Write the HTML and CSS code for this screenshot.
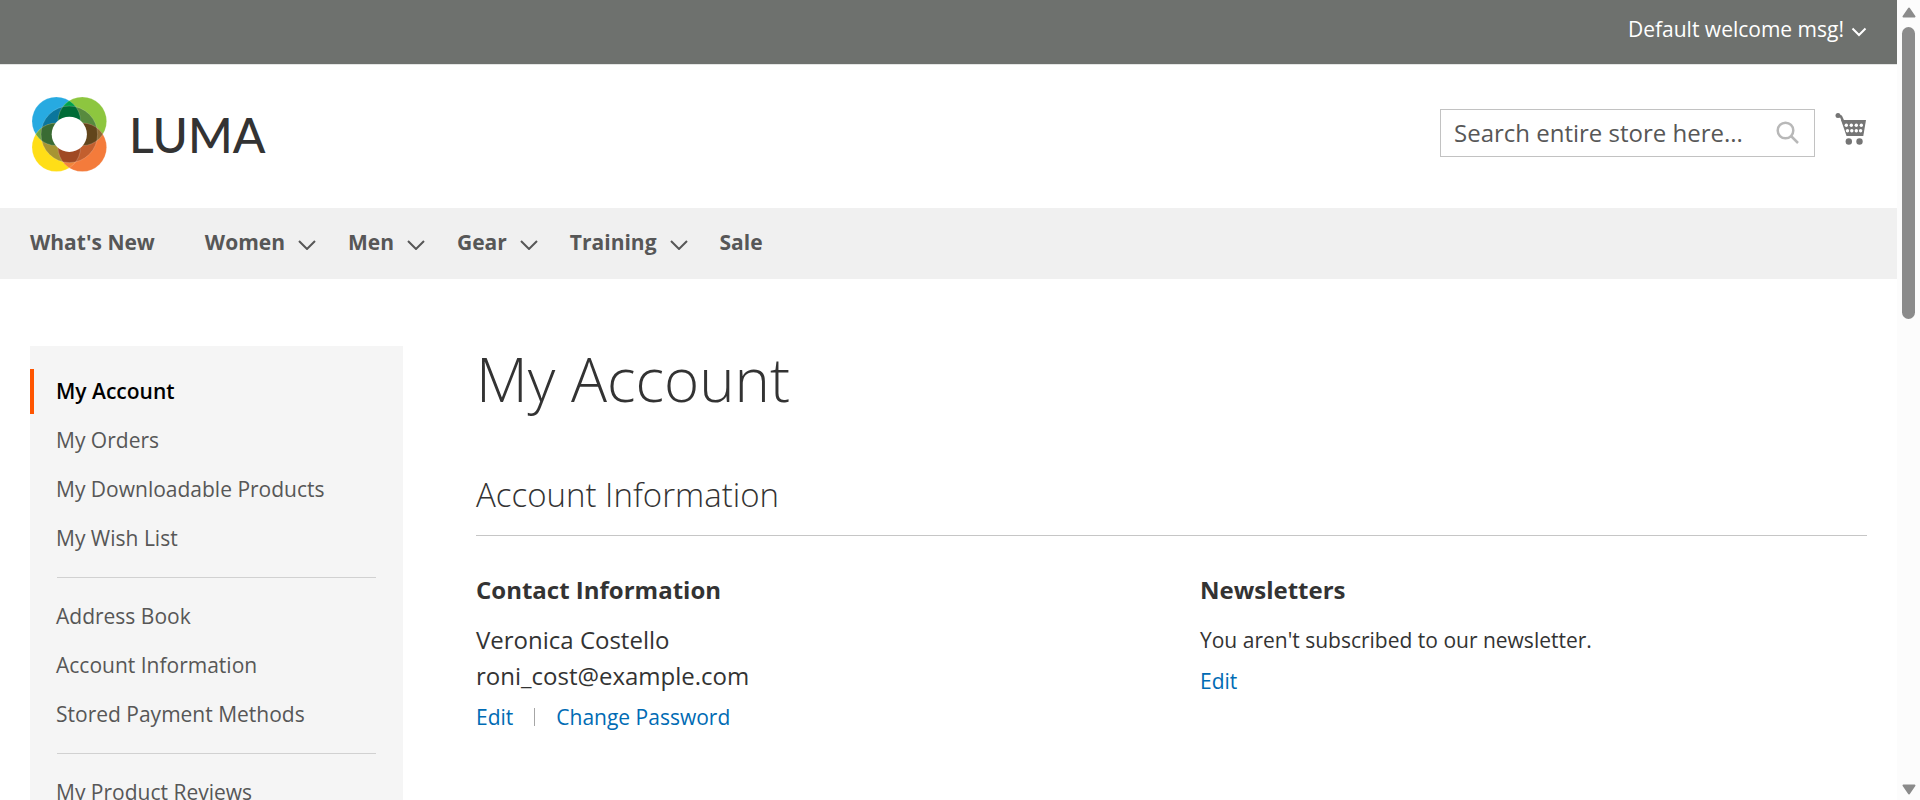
FILE: index.html
```html
<!DOCTYPE html>
<html lang="en">
<head>
<meta charset="utf-8">
<title>My Account</title>
<link rel="stylesheet" href="styles.css">
</head>
<body>
<div class="window">
  <div class="page">
    <div class="topbar">
      <button class="welcome" type="button">Default welcome msg!
        <svg class="welcome-arrow" viewBox="0 0 16 10" aria-hidden="true"><path d="M1.5 1.5 8 8l6.500-6.500"/></svg>
      </button>
    </div>

    <header class="header">
      <a class="logo" href="#" aria-label="Luma home">
        <svg class="logo-mark" viewBox="0 0 75 75" aria-hidden="true">
          <defs>
            <clipPath id="blue"><circle cx="24.300" cy="24.300" r="24.300"/></clipPath>
            <clipPath id="orange"><circle cx="50.300" cy="50.300" r="24.300"/></clipPath>
            <clipPath id="ring"><circle cx="37.300" cy="37.300" r="28.300"/></clipPath>
          </defs>
          <circle cx="24.300" cy="24.300" r="24.300" fill="#27aae1"/>
          <circle cx="50.300" cy="24.300" r="24.300" fill="#8dc63f"/>
          <circle cx="24.300" cy="50.300" r="24.300" fill="#ffde17"/>
          <circle cx="50.300" cy="50.300" r="24.300" fill="#f47b3b"/>
          <g clip-path="url(#blue)">
            <circle cx="50.300" cy="24.300" r="24.300" fill="#00a14b"/>
            <circle cx="24.300" cy="50.300" r="24.300" fill="#6aa343"/>
          </g>
          <g clip-path="url(#orange)">
            <circle cx="50.300" cy="24.300" r="24.300" fill="#8f6a35"/>
            <circle cx="24.300" cy="50.300" r="24.300" fill="#f2853a"/>
          </g>
          <g clip-path="url(#ring)">
            <circle cx="24.300" cy="24.300" r="24.300" fill="#0b769c"/>
            <circle cx="50.300" cy="24.300" r="24.300" fill="#578a3e"/>
            <circle cx="24.300" cy="50.300" r="24.300" fill="#a79433"/>
            <circle cx="50.300" cy="50.300" r="24.300" fill="#c25f2e"/>
            <g clip-path="url(#blue)">
              <circle cx="50.300" cy="24.300" r="24.300" fill="#006b37"/>
              <circle cx="24.300" cy="50.300" r="24.300" fill="#3a6b33"/>
            </g>
            <g clip-path="url(#orange)">
              <circle cx="50.300" cy="24.300" r="24.300" fill="#62451c"/>
              <circle cx="24.300" cy="50.300" r="24.300" fill="#a04923"/>
            </g>
          </g>
          <g fill="none" stroke="#fff" stroke-opacity=".3" stroke-width=".6">
            <circle cx="37.300" cy="37.300" r="28.300"/>
            <circle cx="24.300" cy="24.300" r="24.300"/>
            <circle cx="50.300" cy="24.300" r="24.300"/>
            <circle cx="24.300" cy="50.300" r="24.300"/>
            <circle cx="50.300" cy="50.300" r="24.300"/>
          </g>
          <circle cx="37.300" cy="37.300" r="17.600" fill="#fff"/>
        </svg>
        <span class="logo-name">LUMA</span>
      </a>
      <div class="header-tools">
        <form class="search">
          <input class="search-input" type="text" aria-label="Search" placeholder="Search entire store here...">
          <button class="search-button" type="button" aria-label="Search">
            <svg class="search-icon" viewBox="0 0 24 24" aria-hidden="true"><circle cx="9.500" cy="9.500" r="7.800"/><path d="m15 15 7 7"/></svg>
          </button>
        </form>
        <a class="cart" href="#" aria-label="My Cart">
          <svg class="cart-icon" viewBox="0 0 32 40" aria-hidden="true">
            <path d="M2.500 4.500 6 5.500l8 18" fill="none" stroke="#757575" stroke-width="2.500"/>
            <circle cx="3" cy="4.500" r="2.500"/>
            <path d="M6 9H31l-2.700 16H11.500z"/>
            <g fill="#fff">
              <circle cx="11.300" cy="14.300" r="1.700"/><circle cx="16.300" cy="14.300" r="1.700"/><circle cx="21.300" cy="14.300" r="1.700"/><circle cx="26.300" cy="14.300" r="1.700"/>
              <circle cx="12.500" cy="19.800" r="1.700"/><circle cx="16.800" cy="19.800" r="1.700"/><circle cx="21.300" cy="19.800" r="1.700"/><circle cx="25.600" cy="19.800" r="1.700"/>
            </g>
            <circle cx="13.800" cy="30.500" r="3.200"/><circle cx="24.500" cy="30.500" r="3.200"/>
          </svg>
        </a>
      </div>
    </header>

    <nav class="nav" aria-label="Store">
      <a class="nav-item nav-plain" href="#">What's New</a>
      <a class="nav-item" href="#">Women<svg class="nav-arrow" viewBox="0 0 18 10" aria-hidden="true"><path d="m1 1 8 8 8-8"/></svg></a>
      <a class="nav-item" href="#">Men<svg class="nav-arrow" viewBox="0 0 18 10" aria-hidden="true"><path d="m1 1 8 8 8-8"/></svg></a>
      <a class="nav-item" href="#">Gear<svg class="nav-arrow" viewBox="0 0 18 10" aria-hidden="true"><path d="m1 1 8 8 8-8"/></svg></a>
      <a class="nav-item" href="#">Training<svg class="nav-arrow" viewBox="0 0 18 10" aria-hidden="true"><path d="m1 1 8 8 8-8"/></svg></a>
      <a class="nav-item nav-plain" href="#">Sale</a>
    </nav>

    <div class="columns">
      <aside class="sidebar">
        <ul class="menu">
          <li><a class="menu-item menu-current" href="#" aria-current="page">My Account</a></li>
          <li><a class="menu-item" href="#">My Orders</a></li>
          <li><a class="menu-item" href="#">My Downloadable Products</a></li>
          <li><a class="menu-item" href="#">My Wish List</a></li>
        </ul>
        <hr class="menu-rule">
        <ul class="menu">
          <li><a class="menu-item" href="#">Address Book</a></li>
          <li><a class="menu-item" href="#">Account Information</a></li>
          <li><a class="menu-item" href="#">Stored Payment Methods</a></li>
        </ul>
        <hr class="menu-rule">
        <ul class="menu">
          <li><a class="menu-item" href="#">My Product Reviews</a></li>
        </ul>
      </aside>

      <main class="main">
        <h1 class="title">My Account</h1>
        <section>
          <h2 class="block-title">Account Information</h2>
          <div class="boxes">
            <div class="box">
              <h3 class="box-title">Contact Information</h3>
              <p class="contact">Veronica Costello<br>roni_cost@example.com</p>
              <div class="actions"><a href="#">Edit</a><span class="actions-rule"></span><a href="#">Change Password</a></div>
            </div>
            <div class="box">
              <h3 class="box-title">Newsletters</h3>
              <p class="note">You aren't subscribed to our newsletter.</p>
              <div class="actions"><a href="#">Edit</a></div>
            </div>
          </div>
        </section>
      </main>
    </div>
  </div>

  <div class="scrollbar" aria-hidden="true">
    <svg class="scroll-arrow" viewBox="0 0 14 11"><path d="M7 1.500 12.500 9.500h-11z"/></svg>
    <div class="scroll-track"><div class="scroll-thumb"></div></div>
    <svg class="scroll-arrow" viewBox="0 0 14 11"><path d="M7 9.500 12.500 1.500h-11z"/></svg>
  </div>
</div>
</body>
</html>
```

FILE: styles.css
```css
* {
  box-sizing: border-box;
}

body {
  margin: 0;
  background: #fff;
  color: #333;
  font-family: "Open Sans", sans-serif;
  font-size: 21px;
  line-height: 30px;
}

a {
  color: #006bb4;
  text-decoration: none;
}

h1, h2, h3, p, ul {
  margin: 0;
  padding: 0;
}

ul {
  list-style: none;
}

button {
  border: 0;
  padding: 0;
  background: none;
  color: inherit;
  font: inherit;
}

svg {
  display: block;
  flex: none;
}

.window {
  display: flex;
  height: 100vh;
  overflow: hidden;
}

.page {
  flex: 1;
  min-width: 0;
}

/* Top bar */
.topbar {
  display: flex;
  justify-content: flex-end;
  padding: 14px 30px 20px;
  background: #6e716e;
  color: #fff;
}

.welcome {
  display: flex;
  align-items: center;
  gap: 7px;
}

.welcome-arrow {
  width: 16px;
  height: 10px;
  margin-top: 6px;
  fill: none;
  stroke: #fff;
  stroke-width: 2;
}

/* Header */
.header {
  display: flex;
  align-items: center;
  justify-content: space-between;
  padding: 32px 30px 36px;
  border-top: 1px solid #e4e5e4;
}

.logo {
  display: flex;
  align-items: center;
  gap: 22px;
  padding-left: 2px;
  color: #333;
}

.logo-mark {
  width: 75px;
  height: 75px;
}

.logo-name {
  font-family: Lato, sans-serif;
  font-size: 48px;
  line-height: 48px;
  font-weight: 500;
}

.header-tools {
  display: flex;
  align-items: center;
  gap: 20px;
  padding-bottom: 3px;
}

.search {
  display: flex;
  align-items: center;
  width: 375px;
  height: 48px;
  padding: 0 14px 0 13px;
  border: 1px solid #c2c2c2;
}

.search-input {
  flex: 1;
  min-width: 0;
  border: 0;
  padding: 0;
  background: none;
  font-family: inherit;
  font-size: 24px;
  line-height: 34px;
  outline: 0;
}

.search-input::placeholder {
  color: #575757;
  opacity: 1;
}

.search-icon {
  width: 24px;
  height: 24px;
  fill: none;
  stroke: #b8b8b8;
  stroke-width: 2.5;
}

.cart {
  padding-bottom: 4px;
}

.cart-icon {
  width: 32px;
  height: 40px;
  fill: #757575;
}

/* Navigation */
.nav {
  display: flex;
  gap: 32px;
  padding: 19px 30px 22px;
  background: #f0f0f0;
  font-weight: 700;
}

.nav-item {
  display: flex;
  align-items: center;
  gap: 13px;
  color: #575757;
}

.nav-plain {
  padding-right: 18px;
}

.nav-arrow {
  width: 18px;
  height: 10px;
  margin-top: 6px;
  fill: none;
  stroke: #575757;
  stroke-width: 2;
}

/* Content */
.columns {
  display: flex;
  gap: 73px;
  padding: 67px 30px 0;
}

.sidebar {
  flex: none;
  width: 373px;
  padding: 23px 0;
  background: #f5f5f5;
}

.menu {
  display: grid;
  gap: 4px;
}

.menu-item {
  display: block;
  padding: 7px 20px 8px 22px;
  border-left: 4px solid transparent;
  color: #575757;
}

.menu-current {
  border-color: #ff5501;
  color: #000;
  font-weight: 600;
}

.menu-rule {
  margin: 16px 27px;
  border: 0;
  border-top: 1px solid #d1d1d1;
}

.main {
  flex: 1;
  min-width: 0;
}

.title {
  margin-bottom: 65px;
  font-size: 60px;
  line-height: 66px;
  font-weight: 300;
}

.block-title {
  margin-bottom: 36px;
  padding-bottom: 22px;
  border-bottom: 1px solid #c6c6c6;
  font-size: 33px;
  line-height: 36px;
  font-weight: 300;
}

.boxes {
  display: grid;
  grid-template-columns: 1fr 1fr;
  gap: 57px;
}

.box-title {
  margin-bottom: 14px;
  font-size: 24px;
  line-height: 36px;
  font-weight: 700;
}

.contact {
  font-size: 24px;
  line-height: 36px;
}

.note {
  line-height: 36px;
}

.actions {
  display: flex;
  align-items: center;
  gap: 21px;
  margin-top: 8px;
}

.actions-rule {
  width: 1px;
  height: 18px;
  background: #a6a6a6;
}

/* Scrollbar */
.scrollbar {
  display: flex;
  flex-direction: column;
  align-items: center;
  flex: none;
  width: 23px;
  padding: 7px 0 5px;
  background: #fcfcfc;
}

.scroll-arrow {
  width: 14px;
  height: 11px;
  fill: #8b8b8b;
  stroke: #8b8b8b;
  stroke-width: 2;
  stroke-linejoin: round;
}

.scroll-track {
  flex: 1;
  width: 13px;
  margin: 9px 0;
}

.scroll-thumb {
  height: 39%;
  border-radius: 7px;
  background: #8b8b8b;
}
```
